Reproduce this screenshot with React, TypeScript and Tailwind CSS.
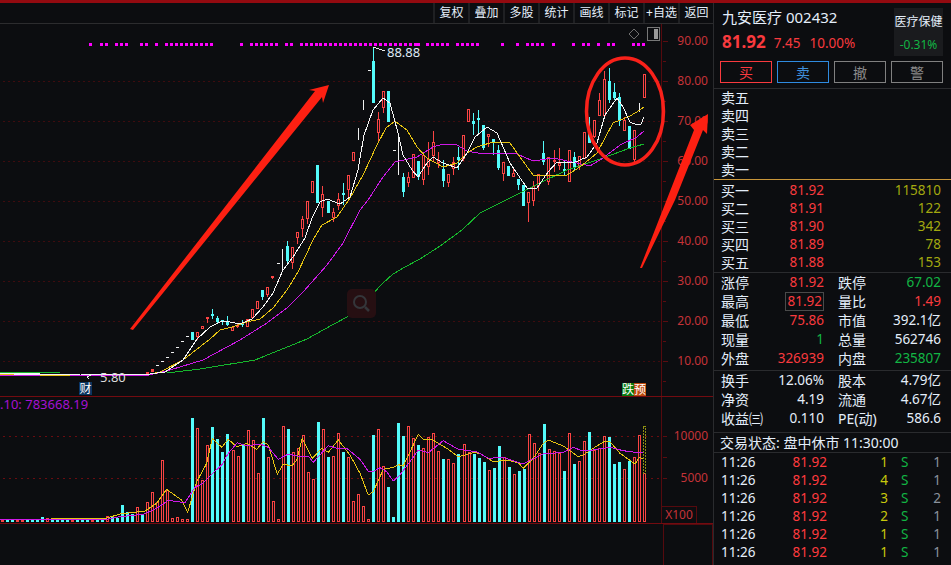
import React from "react";

const FONT = { fontFamily: '"Noto Sans", "Noto Sans CJK SC", sans-serif' };

type Candle = { kind: string; x: number; top: number; bottom: number; hi: number; lo: number };
type Row = [string, number, number, number, number?, number?];

// rows are measured on 3x crops, ox/oy is where the crop starts
function segment(ox: number, oy: number, rows: Row[]): Candle[] {
    return rows.map(([kind, zx, top, bottom, hi, lo]) => ({
        kind,
        x: Math.round(ox + zx / 3),
        top: Math.round(oy + top / 3),
        bottom: Math.round(oy + bottom / 3),
        hi: Math.round(oy + (hi ?? top) / 3),
        lo: Math.round(oy + (lo ?? bottom) / 3),
    }));
}

const candles: Candle[] = [
    ...segment(180, 130, [
        ["c", 37, 607, 630], ["r", 52, 607, 622, 607, 630], ["r", 67, 587, 598], ["r", 82, 562, 568, 562, 578],
        ["c", 97, 552, 558, 537, 567], ["c", 112, 564, 576, 558, 580], ["c", 127, 570, 572, 570, 585],
        ["c", 142, 572, 585, 558, 588], ["r", 157, 592, 602], ["r", 172, 586, 592, 580, 595],
        ["c", 187, 578, 586, 570, 590], ["r", 202, 566, 592], ["r", 217, 538, 565], ["r", 232, 512, 538],
        ["c", 247, 480, 500, 480, 510], ["r", 262, 472, 494, 472, 500], ["r", 277, 437, 443, 437, 448],
        ["w", 291, 400, 401], ["w", 305, 357, 422], ["c", 322, 348, 392, 333, 402], ["r", 337, 352, 400, 352, 416],
        ["r", 352, 307, 323, 307, 342], ["r", 367, 268, 298, 258, 320], ["r", 382, 214, 268, 214, 282],
        ["r", 397, 154, 190], ["c", 412, 105, 218], ["r", 427, 193, 235, 168, 260], ["c", 445, 214, 250],
        ["r", 460, 245, 265, 235, 275], ["r", 475, 208, 228, 190, 240], ["c", 490, 190, 194, 160, 225],
        ["r", 505, 136, 180, 136, 205], ["r", 520, 67, 92],
    ]),
    ...segment(320, 0, [
        ["w", 115, 385, 420], ["w", 130, 300, 330], ["w", 143, 210, 211], ["c", 160, 182, 308, 140, 308],
        ["r", 175, 357, 400, 335, 430], ["r", 190, 273, 323, 273, 340], ["c", 205, 273, 365],
        ["w", 220, 451, 452], ["w", 235, 405, 525],
    ]),
    ...segment(400, 100, [
        ["c", 10, 232, 275, 220, 290], ["r", 25, 232, 248, 215, 262], ["r", 40, 163, 235], ["c", 55, 183, 232, 183, 240],
        ["r", 70, 165, 240, 165, 255], ["r", 85, 178, 200, 125, 225], ["r", 100, 125, 168, 92, 185],
        ["r", 115, 180, 190, 155, 205], ["c", 130, 207, 242, 180, 260], ["r", 145, 222, 248, 222, 260],
        ["r", 160, 187, 208, 172, 225], ["c", 175, 172, 180, 140, 210], ["r", 190, 105, 178, 105, 183],
        ["r", 205, 28, 66], ["c", 220, 63, 73, 40, 105], ["c", 235, 53, 60, 30, 100], ["c", 250, 75, 145, 75, 150],
        ["r", 265, 102, 112, 102, 140], ["c", 280, 118, 130, 118, 165], ["c", 295, 150, 205, 135, 210],
        ["r", 310, 187, 222, 187, 243], ["c", 325, 198, 228], ["r", 340, 220, 230, 205, 230],
        ["c", 355, 237, 255, 237, 270], ["c", 370, 255, 318], ["r", 385, 277, 308, 277, 365],
        ["r", 400, 257, 302, 243, 318], ["r", 415, 222, 258, 222, 272], ["c", 430, 160, 185, 122, 195],
        ["r", 445, 170, 245, 170, 255], ["r", 462, 180, 186, 150, 215], ["r", 478, 188, 197, 145, 210],
        ["c", 493, 207, 214, 180, 225], ["r", 508, 150, 245], ["c", 523, 170, 205, 155, 210],
        ["r", 538, 168, 198, 168, 210], ["r", 553, 97, 177], ["c", 568, 100, 130, 52, 130],
        ["r", 583, 60, 110, 60, 115],
    ]),
    ...segment(570, 50, [
        ["r", 88, 150, 198, 130, 198], ["r", 103, 88, 198, 62, 198], ["c", 118, 92, 150, 55, 160],
        ["c", 133, 125, 145, 100, 150], ["c", 148, 142, 212, 130, 228], ["r", 163, 210, 242, 200, 242],
        ["c", 178, 228, 297], ["r", 193, 240, 330, 240, 340], ["w", 208, 160, 185], ["r", 223, 72, 143],
    ]),
];

const earlyMarks = [[147, 372], [152, 369], [157, 365], [162, 361], [167, 357], [172, 352], [177, 347], [182, 341], [187, 336]];

const ma5 = "0,373 40,374 80,374 120,375 150,374 165,372 183,360 197,339 210,327 222,321 230,322 240,324 252,319 263,307 273,293 283,270 293,257 305,238 312,218 320,202 327,199 340,204 350,197 358,170 364,135 373,110 383,98 390,103 398,133 403,155 412,170 418,177 427,163 433,157 443,163 457,168 467,153 475,137 487,127 497,133 510,163 527,188 537,188 548,172 557,162 573,163 587,157 597,143 605,115 617,98 623,107 630,122 637,125 641,124 644,117";
const ma10 = "0,374 70,375 120,375 150,374 160,372 183,360 210,339 220,330 232,327 247,322 260,319 273,308 287,290 298,272 313,240 322,225 337,217 350,198 363,175 377,145 386,128 395,121 407,130 417,147 427,158 443,167 457,163 467,153 477,147 493,142 510,143 520,157 533,175 550,176 567,175 580,167 597,153 613,123 630,116 640,110 644,107";
const ma20 = "0,375 145,376 170,370 203,360 240,340 267,323 287,308 303,292 327,265 343,243 360,210 368,200 383,177 395,162 417,157 433,147 443,144 457,145 467,151 483,154 500,153 517,154 533,161 553,158 577,163 590,166 603,158 620,145 637,137 644,131";
const ma60 = "0,372 60,373 167,373 200,369 255,360 307,339 323,330 347,317 367,300 382,284 393,274 405,267 420,259 440,246 462,230 480,213 500,203 520,193 540,183 567,170 603,158 630,148 644,144";

const dotsA = [271, 304, 319, 349, 364, 379, 424, 439, 469, 499, 514, 529, 544, 559, 574, 589, 604, 619, 634, 724, 754, 769, 784, 799, 814, 829, 859, 874, 904, 919, 934, 949];
const dotsB = [0, 15, 30, 45, 60, 75, 90, 105, 120, 135, 150, 165, 180, 195, 210, 225, 240, 255, 270, 285, 295, 322, 337, 352, 367, 382, 412, 427, 442, 457, 472, 547, 592, 622, 637, 652, 667, 700, 760, 790, 805, 835, 865, 880, 940, 955, 970];
const signalDots = [...dotsA.map((d) => Math.round(d / 3)), ...dotsB.map((d) => Math.round(320 + d / 3))];

// volume bars: first 72 from the left crop, the rest from the right crop
const volLeft: [string, number][] = [
    ["r", 480], ["c", 480], ["c", 480], ["r", 480], ["r", 480], ["c", 480], ["c", 480], ["c", 480], ["c", 471], ["r", 473],
    ["c", 480], ["c", 480], ["c", 480], ["c", 480], ["r", 480], ["c", 480], ["c", 474], ["c", 480], ["r", 480], ["c", 480],
    ["c", 480], ["r", 468], ["c", 468], ["c", 474], ["c", 435], ["c", 456], ["c", 462], ["r", 442], ["c", 462], ["r", 427],
    ["r", 396], ["r", 426], ["r", 300], ["r", 390], ["r", 474], ["r", 471], ["r", 477], ["r", 477], ["c", 175], ["r", 205],
    ["r", 360], ["r", 255], ["c", 202], ["c", 238], ["c", 276], ["c", 222], ["r", 270], ["r", 288], ["c", 255], ["r", 210],
    ["r", 240], ["r", 340], ["c", 175], ["r", 292], ["r", 423], ["r", 478], ["r", 198], ["c", 207], ["r", 276], ["r", 265],
    ["r", 226], ["r", 336], ["r", 357], ["c", 186], ["r", 207], ["c", 291], ["r", 288], ["r", 220], ["c", 276], ["r", 291],
    ["r", 423], ["r", 402],
];
const volRight: [string, number][] = [
    ["r", 378], ["r", 418], ["c", 165], ["r", 148], ["r", 258], ["c", 321], ["c", 411], ["c", 129], ["c", 168], ["r", 139],
    ["r", 175], ["c", 195], ["r", 205], ["r", 172], ["r", 160], ["r", 213], ["c", 237], ["r", 237], ["r", 250], ["c", 222],
    ["r", 193], ["r", 216], ["c", 222], ["c", 234], ["c", 246], ["r", 271], ["c", 264], ["c", 198], ["r", 230], ["c", 261],
    ["r", 282], ["c", 273], ["c", 267], ["r", 163], ["r", 190], ["r", 220], ["c", 132], ["r", 208], ["r", 213], ["r", 218],
    ["c", 273], ["r", 160], ["c", 252], ["r", 244], ["r", 184], ["c", 156], ["r", 210], ["r", 205], ["r", 169], ["c", 171],
    ["c", 252], ["c", 246], ["r", 267], ["c", 243], ["r", 232], ["r", 166], ["r", 280],
];
const volBars = [
    ...volLeft.map(([kind, v], i) => ({ kind, x: 1.5 + 5.022 * i, top: 360 + v / 3 })),
    ...volRight.map(([kind, v], i) => ({ kind, x: 644.3 - 5.022 * (volRight.length - 1 - i), top: 380 + v / 3 })),
];

function toPoints(ox: number, oy: number, pts: number[][]) {
    return pts.map(([x, y]) => `${(ox + x / 3).toFixed(1)},${(oy + y / 3).toFixed(1)}`).join(" ");
}

const volYellow = toPoints(360, 360, [[-1080, 478], [-765, 476], [-720, 462], [-645, 453], [-610, 430], [-580, 388], [-550, 410], [-535, 420], [-517, 457], [-490, 365], [-460, 310], [-443, 235], [-415, 262], [-395, 238], [-370, 260], [-340, 250], [-310, 268], [-290, 245], [-275, 255], [-248, 343], [-230, 312], [-205, 318], [-190, 300], [-173, 235], [-143, 295], [-115, 265], [-95, 277], [-65, 240], [-30, 285], [0, 340], [25, 405], [40, 395], [70, 328], [100, 322], [115, 314], [130, 318], [175, 223], [190, 238], [215, 238], [260, 265], [295, 290], [340, 278], [360, 280], [400, 305], [440, 300], [475, 308], [490, 325], [520, 295], [550, 250], [565, 240], [610, 258], [655, 290], [670, 285], [700, 265], [735, 243], [750, 245], [780, 280], [825, 312], [838, 292], [850, 297]]);
const volMagenta = toPoints(360, 360, [[-1080, 480], [-760, 478], [-720, 470], [-650, 463], [-610, 445], [-575, 421], [-525, 428], [-495, 382], [-475, 372], [-440, 338], [-415, 315], [-395, 280], [-368, 248], [-340, 258], [-300, 252], [-275, 262], [-245, 298], [-215, 282], [-190, 288], [-155, 288], [-140, 307], [-95, 257], [-70, 265], [-40, 265], [0, 298], [25, 334], [40, 334], [60, 323], [80, 335], [100, 363], [120, 345], [150, 305], [175, 270], [205, 278], [250, 242], [295, 268], [350, 275], [385, 295], [430, 292], [490, 312], [550, 282], [610, 277], [640, 262], [665, 272], [700, 270], [750, 262], [790, 272], [825, 277], [850, 279]]);

const RED = "text-[#f93a3e]";
const GREEN = "text-[#12b544]";
const OLIVE = "text-[#a3a80f]";
const WHITE = "text-[#e4eefa]";

const tools = ["复权", "叠加", "多股", "统计", "画线", "标记", "+自选", "返回"];
const sellRows = ["卖五", "卖四", "卖三", "卖二", "卖一"];
const buyRows = [
    ["买一", "81.92", "115810"], ["买二", "81.91", "122"], ["买三", "81.90", "342"], ["买四", "81.89", "78"], ["买五", "81.88", "153"],
];
const ticks = [
    ["1", "1"], ["4", "1"], ["3", "2"], ["2", "1"], ["1", "1"], ["1", "1"], ["4", "1"],
];

function Stat({ label, value, valueClass, label2, value2, value2Class, boxed }: {
    label: string; value: string; valueClass: string; label2: string; value2: string; value2Class: string; boxed?: boolean;
}) {
    return (
        <div className="flex h-[19px] shrink-0 items-center pl-[7px] pr-[10px]">
            <span className={`w-[40px] text-[14px] whitespace-nowrap ${WHITE}`}>{label}</span>
            <span className={`ml-auto flex h-[19px] w-[64px] items-center justify-end pr-[1px] ${valueClass}`}>
                {boxed ? <span className="border border-[#4a4a4a] px-[1px] leading-[17px]">{value}</span> : value}
            </span>
            <span className={`ml-[13px] w-[40px] text-[14px] whitespace-nowrap ${WHITE}`}>{label2}</span>
            <span className={`flex-1 text-right whitespace-nowrap ${value2Class}`}>{value2}</span>
        </div>
    );
}

function MainChart() {
    return (
        <svg className="absolute inset-0" width={713} height={373} viewBox="0 24 713 373">
            {[81, 121, 161, 201, 241, 281, 321, 361].map((y) => (
                <line key={y} x1={3} x2={662} y1={y + 0.5} y2={y + 0.5} stroke="#3f0c0f" strokeDasharray="2 3" />
            ))}
            {[41, 61, 81, 101, 121, 141, 161, 181, 201, 221, 241, 261, 281, 301, 321, 341, 361, 381].map((y) => (
                <line key={y} x1={663} x2={y % 40 === 1 ? 668 : 666} y1={y + 0.5} y2={y + 0.5} stroke="#5c0c10" />
            ))}
            {signalDots.map((x, i) => (
                <rect key={i} x={x - 1} y={43} width={3} height={3} fill="#ff00ff" />
            ))}
            <g shapeRendering="crispEdges">
                {candles.map((c, i) => {
                    if (c.kind === "w") {
                        return <rect key={i} x={c.x} y={c.top} width={c.bottom - c.top > 2 ? 1 : 3} height={Math.max(c.bottom - c.top, 1)} fill="#f0f0f0" />;
                    }
                    const color = c.kind === "r" ? "#fb4444" : "#53fbfb";
                    return (
                        <g key={i}>
                            <line x1={c.x + 0.5} x2={c.x + 0.5} y1={c.hi} y2={c.lo} stroke={color} />
                            {c.kind === "r"
                                ? <rect x={c.x - 0.5} y={c.top + 0.5} width={2} height={Math.max(c.bottom - c.top - 1, 1)} fill="#0c0d10" stroke={color} />
                                : <rect x={c.x - 1} y={c.top} width={3} height={c.bottom - c.top} fill={color} />}
                        </g>
                    );
                })}
                {earlyMarks.map(([x, y], i) => (
                    <rect key={i} x={x - 1} y={y} width={3} height={i < 2 ? 3 : 1} fill={i < 2 ? "#fb4444" : "#f0f0f0"} />
                ))}
                <polyline points={ma60} fill="none" stroke="#16b52c" />
                <polyline points={ma20} fill="none" stroke="#cc19e6" />
                <polyline points={ma10} fill="none" stroke="#e6c312" />
                <polyline points={ma5} fill="none" stroke="#f5f5f5" />
                <rect x={14} y={374} width={42} height={1} fill="#f5f5f5" />
                <rect x={40} y={375} width={30} height={1} fill="#e6c312" />
                <polyline points="373,47 385,51" fill="none" stroke="#e8e8e8" />
                <polyline points="91,375 87,377 89,379" fill="none" stroke="#e8e8e8" />
            </g>
            <text x={387} y={57} fontSize={13} fill="#dfe9f5" style={FONT}>88.88</text>
            <text x={100} y={382} fontSize={13} fill="#dcdcdc" style={FONT}>5.80</text>

            {/* watermark */}
            <rect x={347} y={289} width={29} height={29} rx={5} fill="#260f12" />
            <circle cx={360} cy={302} r={6} fill="none" stroke="#34363a" strokeWidth={2} />
            <line x1={365} y1={307} x2={369} y2={311} stroke="#34363a" strokeWidth={2.5} />

            {/* layout icons */}
            <polygon points="634,29 639,34 634,39 629,34" fill="none" stroke="#6e6e6e" />
            <rect x={647.5} y={27.5} width={12} height={13} fill="none" stroke="#777" />
            <rect x={654} y={29} width={4} height={10} fill="#999" />

            {/* hand drawn marks */}
            <polygon points="130,329 315,91 309,90 329,85 323,103 322,97 133,330" fill="#fd2012" />
            <polygon points="640,268 694,130 690,125 708,114 707,134 703,130 675,200 642,268" fill="#fd2012" />
            <ellipse cx={625} cy={111.5} rx={38.5} ry={53.5} fill="none" stroke="#f9211a" strokeWidth={3.5} />
        </svg>
    );
}

function VolumeChart() {
    return (
        <svg className="absolute inset-0" width={713} height={127} viewBox="0 397 713 127">
            {[436, 478].map((y) => (
                <line key={y} x1={3} x2={662} y1={y + 0.5} y2={y + 0.5} stroke="#6a0c10" strokeDasharray="2 4" />
            ))}
            {[436, 457, 478].map((y) => (
                <line key={y} x1={663} x2={667} y1={y + 0.5} y2={y + 0.5} stroke="#5c0c10" />
            ))}
            <g shapeRendering="crispEdges">
                {volBars.map((b, i) => {
                    const x = Math.round(b.x);
                    const top = Math.round(b.top);
                    return b.kind === "r"
                        ? <rect key={i} x={x - 0.5} y={top + 0.5} width={2} height={Math.max(521 - top, 1)} fill="#0c0d10" stroke="#fb4444" />
                        : <rect key={i} x={x - 1} y={top} width={3} height={522 - top} fill="#53fbfb" />;
                })}
                <rect x={643.5} y={426.5} width={2} height={47} fill="none" stroke="#8f8f12" strokeDasharray="2 1" />
                <polyline points={volYellow} fill="none" stroke="#e6c312" />
                <polyline points={volMagenta} fill="none" stroke="#cc19e6" />
            </g>
        </svg>
    );
}

export default function App() {
    return (
        <div className="flex h-[565px] w-[951px] flex-col overflow-hidden bg-[#0c0d10] text-[13.5px]" style={FONT}>
            <div className="h-[3px] shrink-0 bg-[#930a10]" />
            <div className="flex min-h-0 flex-1">
                <div className="flex w-[713px] flex-col">
                    <div className="flex h-[21px] shrink-0 justify-end border-b border-[#2c2c2e]">
                        {tools.map((t) => (
                            <div key={t} className={`flex w-[35px] items-center justify-center border-l-2 border-[#1f2023] text-[12px] whitespace-nowrap ${WHITE}`}>{t}</div>
                        ))}
                    </div>

                    <div className="relative flex h-[373px] shrink-0 border-b border-[#730b10]">
                        <div className="w-[662px] border-r border-[#560a0e]" />
                        <div className="flex flex-1 flex-col items-end gap-[26px] pt-[10px] pr-[5px] text-[12px] text-[#c53338]">
                            {["90.00", "80.00", "70.00", "60.00", "50.00", "40.00", "30.00", "20.00", "10.00"].map((v) => (
                                <span key={v} className="h-[14px] leading-[14px]">{v}</span>
                            ))}
                        </div>
                        <MainChart />
                        <div className="absolute top-[358px] left-[79px] flex h-[13px] w-[13px] items-center justify-center bg-[#0a3560] text-[12px] text-white">财</div>
                        <div className="absolute top-[359px] left-[622px] flex h-[13px] text-[12px] leading-[13px] text-white">
                            <span className="bg-[#08780f]">跌</span>
                            <span className="bg-[#bd4a0e]">预</span>
                        </div>
                    </div>

                    <div className="relative flex h-[127px] shrink-0 border-b border-[#730b10]">
                        <div className="w-[662px] border-r border-[#560a0e]" />
                        <div className="flex flex-1 flex-col text-[12px] text-[#c53338]">
                            <div className="flex flex-col items-end gap-[28px] pt-[32px] pr-[5px]">
                                <span className="h-[14px] leading-[14px]">10000</span>
                                <span className="h-[14px] leading-[14px]">5000</span>
                            </div>
                            <div className="mt-auto flex h-[17px] w-[35px] items-center justify-center border-t border-r border-[#560a0e]">X100</div>
                        </div>
                        <VolumeChart />
                        <span className="absolute top-0 left-0 text-[13px] leading-[15px] text-[#a512d2]">.10: 783668.19</span>
                    </div>

                    <div className="flex flex-1">
                        <div className="w-[663px]" />
                        <div className="flex-1 border-t border-r border-l border-[#560a0e]" />
                    </div>
                </div>

                <div className="flex w-[238px] flex-col border-l border-[#2a2b2e]">
                    <div className="flex h-[56px] shrink-0 pl-[8px] pr-[8px]">
                        <div className="flex-1 pt-[2px]">
                            <div className={`h-[25px] text-[15px] leading-[25px] whitespace-nowrap ${WHITE}`}>九安医疗 002432</div>
                            <div className={`flex items-baseline whitespace-nowrap ${RED}`}>
                                <span className="text-[17px] leading-[24px] font-bold">81.92</span>
                                <span className="ml-[8px]">7.45</span>
                                <span className="ml-[9px]">10.00%</span>
                            </div>
                        </div>
                        <div className="mt-[5px] flex h-[48px] w-[49px] flex-col items-center bg-[#1a1b1e] pt-[3px] text-[12px] whitespace-nowrap">
                            <span className={`h-[22px] leading-[22px] ${WHITE}`}>医疗保健</span>
                            <span className={`mt-[2px] leading-[20px] ${GREEN}`}>-0.31%</span>
                        </div>
                    </div>

                    <div className="mt-[2px] flex shrink-0 gap-[5px] pl-[6px] text-[14px]">
                        <div className={`flex h-[22px] w-[52px] items-center justify-center border border-[#f93a3e] ${RED}`}>买</div>
                        <div className="flex h-[22px] w-[52px] items-center justify-center border border-[#2f8be0] text-[#3f90dc]">卖</div>
                        <div className="flex h-[22px] w-[52px] items-center justify-center border border-[#808080] text-[#8a8a8a]">撤</div>
                        <div className="flex h-[22px] w-[52px] items-center justify-center border border-[#808080] text-[#8a8a8a]">警</div>
                    </div>

                    <div className="mt-[5px] flex h-[91px] shrink-0 flex-col justify-start border-t border-[#2a2b2e]">
                        <div className="-mt-[1px]">
                            {sellRows.map((s) => (
                                <div key={s} className={`flex h-[18px] shrink-0 items-center pl-[7px] text-[14px] ${WHITE}`}>{s}</div>
                            ))}
                        </div>
                    </div>

                    <div className="flex h-[93px] shrink-0 flex-col border-t border-[#c9963a] pt-[1px]">
                        {buyRows.map(([label, price, vol]) => (
                            <div key={label} className="flex h-[18px] shrink-0 items-center pl-[7px] pr-[10px]">
                                <span className={`w-[40px] text-[14px] ${WHITE}`}>{label}</span>
                                <span className={`w-[63px] text-right ${RED}`}>{price}</span>
                                <span className={`flex-1 text-right ${OLIVE}`}>{vol}</span>
                            </div>
                        ))}
                    </div>

                    <div className="flex h-[98px] shrink-0 flex-col border-t border-[#2a2b2e]">
                        <Stat label="涨停" value="81.92" valueClass={RED} label2="跌停" value2="67.02" value2Class={GREEN} />
                        <Stat label="最高" value="81.92" valueClass={RED} label2="量比" value2="1.49" value2Class={RED} boxed />
                        <Stat label="最低" value="75.86" valueClass={RED} label2="市值" value2="392.1亿" value2Class={WHITE} />
                        <Stat label="现量" value="1" valueClass={GREEN} label2="总量" value2="562746" value2Class={WHITE} />
                        <Stat label="外盘" value="326939" valueClass={RED} label2="内盘" value2="235807" value2Class={GREEN} />
                    </div>

                    <div className="flex h-[62px] shrink-0 flex-col border-t border-[#2a2b2e]">
                        <Stat label="换手" value="12.06%" valueClass={WHITE} label2="股本" value2="4.79亿" value2Class={WHITE} />
                        <Stat label="净资" value="4.19" valueClass={WHITE} label2="流通" value2="4.67亿" value2Class={WHITE} />
                        <Stat label="收益㈢" value="0.110" valueClass={WHITE} label2="PE(动)" value2="586.6" value2Class={WHITE} />
                    </div>

                    <div className={`flex h-[20px] shrink-0 items-center border-t border-[#2a2b2e] pl-[6px] text-[14px] whitespace-nowrap ${WHITE}`}>交易状态: 盘中休市 11:30:00</div>

                    <div className="flex min-h-0 flex-col overflow-hidden border-t border-[#2a2b2e]">
                        {ticks.map(([vol, count], i) => (
                            <div key={i} className="flex h-[18px] shrink-0 items-center pl-[7px] pr-[10px]">
                                <span className={`w-[40px] ${WHITE}`}>11:26</span>
                                <span className="w-[66px] text-right text-[#ff3a3e]">81.92</span>
                                <span className="w-[61px] text-right text-[#c8c80c]">{vol}</span>
                                <span className={`ml-[13px] w-[10px] ${GREEN}`}>S</span>
                                <span className="flex-1 text-right text-[#8a919c]">{count}</span>
                            </div>
                        ))}
                    </div>
                </div>
            </div>
        </div>
    );
}
